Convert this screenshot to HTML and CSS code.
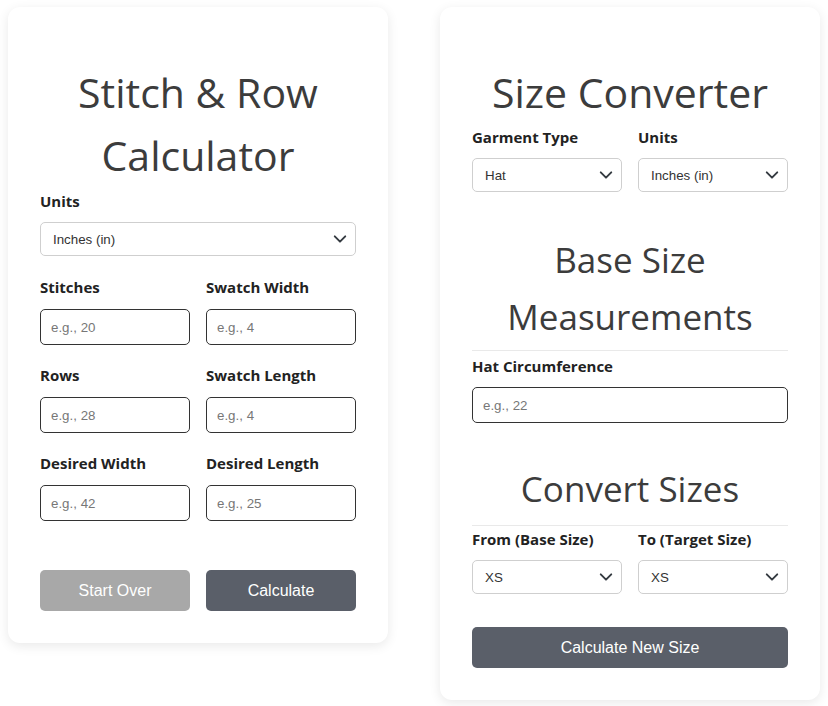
FILE: index.html
```html
<!DOCTYPE html>
<html>
<head>
<meta charset="utf-8">
<link rel="stylesheet" href="styles.css">
</head>
<body>
<div class="page">
  <section class="card card-left">
    <h1 class="title">Stitch &amp; Row Calculator</h1>
    <div class="field">
      <label class="label">Units</label>
      <div class="select"><span>Inches (in)</span><svg class="chev" viewBox="0 0 16 16"><path d="M2 5l6 6 6-6"/></svg></div>
    </div>
    <div class="grid">
      <div class="field"><label class="label">Stitches</label><input class="input" placeholder="e.g., 20"></div>
      <div class="field"><label class="label">Swatch Width</label><input class="input" placeholder="e.g., 4"></div>
      <div class="field"><label class="label">Rows</label><input class="input" placeholder="e.g., 28"></div>
      <div class="field"><label class="label">Swatch Length</label><input class="input" placeholder="e.g., 4"></div>
      <div class="field"><label class="label">Desired Width</label><input class="input" placeholder="e.g., 42"></div>
      <div class="field"><label class="label">Desired Length</label><input class="input" placeholder="e.g., 25"></div>
    </div>
    <div class="buttons">
      <button class="btn btn-light">Start Over</button>
      <button class="btn btn-dark">Calculate</button>
    </div>
  </section>

  <section class="card card-right">
    <h1 class="title">Size Converter</h1>
    <div class="grid grid-head">
      <div class="field"><label class="label">Garment Type</label>
        <div class="select"><span>Hat</span><svg class="chev" viewBox="0 0 16 16"><path d="M2 5l6 6 6-6"/></svg></div></div>
      <div class="field"><label class="label">Units</label>
        <div class="select"><span>Inches (in)</span><svg class="chev" viewBox="0 0 16 16"><path d="M2 5l6 6 6-6"/></svg></div></div>
    </div>
    <h2 class="subtitle">Base Size Measurements</h2>
    <div class="field"><label class="label">Hat Circumference</label><input class="input" placeholder="e.g., 22"></div>
    <h2 class="subtitle subtitle-2">Convert Sizes</h2>
    <div class="grid grid-sub">
      <div class="field"><label class="label">From (Base Size)</label>
        <div class="select"><span>XS</span><svg class="chev" viewBox="0 0 16 16"><path d="M2 5l6 6 6-6"/></svg></div></div>
      <div class="field"><label class="label">To (Target Size)</label>
        <div class="select"><span>XS</span><svg class="chev" viewBox="0 0 16 16"><path d="M2 5l6 6 6-6"/></svg></div></div>
    </div>
    <button class="btn btn-dark btn-wide">Calculate New Size</button>
  </section>
</div>
</body>
</html>
```
FILE: styles.css
```css
* { box-sizing: border-box; }
html, body { margin: 0; padding: 0; background: #ffffff; }
body { font-family: "Open Sans", "Noto Sans", sans-serif; color: #222; }

.page {
  display: flex;
  align-items: flex-start;
  gap: 52px;
  padding: 7px 8px;
}

.card {
  width: 380px;
  background: #fff;
  border-radius: 12px;
  box-shadow: 0 3px 12px rgba(0, 0, 0, 0.09);
  padding: 32px;
  display: flex;
  flex-direction: column;
}

.title {
  font-weight: 400;
  font-size: 41px;
  line-height: 63px;
  color: #3c3c3c;
  text-align: center;
  margin: 22px 0 4px;
}

.subtitle {
  font-weight: 400;
  font-size: 35px;
  line-height: 57px;
  color: #3c3c3c;
  text-align: center;
  margin: 39px 0 5px;
  padding-bottom: 5px;
  border-bottom: 1px solid #e9e9e9;
}
.subtitle-2 { margin-top: 37px; padding-bottom: 8px; margin-bottom: 3px; }

.field { display: flex; flex-direction: column; }

.label {
  font-weight: 700;
  font-size: 15px;
  line-height: 20px;
  color: #222;
  margin-bottom: 11px;
}

.grid {
  display: grid;
  grid-template-columns: 1fr 1fr;
  column-gap: 16px;
  row-gap: 20px;
  margin-top: 21px;
}
.grid .label { margin-bottom: 12px; }
.grid-head { margin-top: -1px; }
.grid-sub { margin-top: 0; }
.grid-head .label { margin-bottom: 11px; }
.grid-sub .label { margin-bottom: 11px; }

.select {
  height: 34px;
  border: 1px solid #cfcfcf;
  border-radius: 5px;
  display: flex;
  align-items: center;
  justify-content: space-between;
  padding: 0 8px 0 12px;
  font-family: "Liberation Sans", Arial, sans-serif;
  font-size: 13.33px;
  color: #333;
}
.chev { width: 14px; height: 14px; fill: none; stroke: #343a40; stroke-width: 2.2; stroke-linecap: round; stroke-linejoin: round; }

.input {
  height: 36px;
  border: 1px solid #333;
  border-radius: 5px;
  padding: 0 10px;
  font-family: "Liberation Sans", Arial, sans-serif;
  font-size: 13.33px;
  color: #333;
  background: #fff;
  width: 100%;
}
.input::placeholder { color: #777; }

.buttons {
  display: grid;
  grid-template-columns: 1fr 1fr;
  gap: 16px;
  margin-top: 49px;
}

.btn {
  height: 41px;
  border: none;
  border-radius: 5px;
  color: #fff;
  font-family: "Liberation Sans", Arial, sans-serif;
  font-size: 16px;
}
.btn-light { background: #a8a8a8; }
.btn-dark { background: #5a5f69; }
.btn-wide { margin-top: 33px; width: 100%; }
```
